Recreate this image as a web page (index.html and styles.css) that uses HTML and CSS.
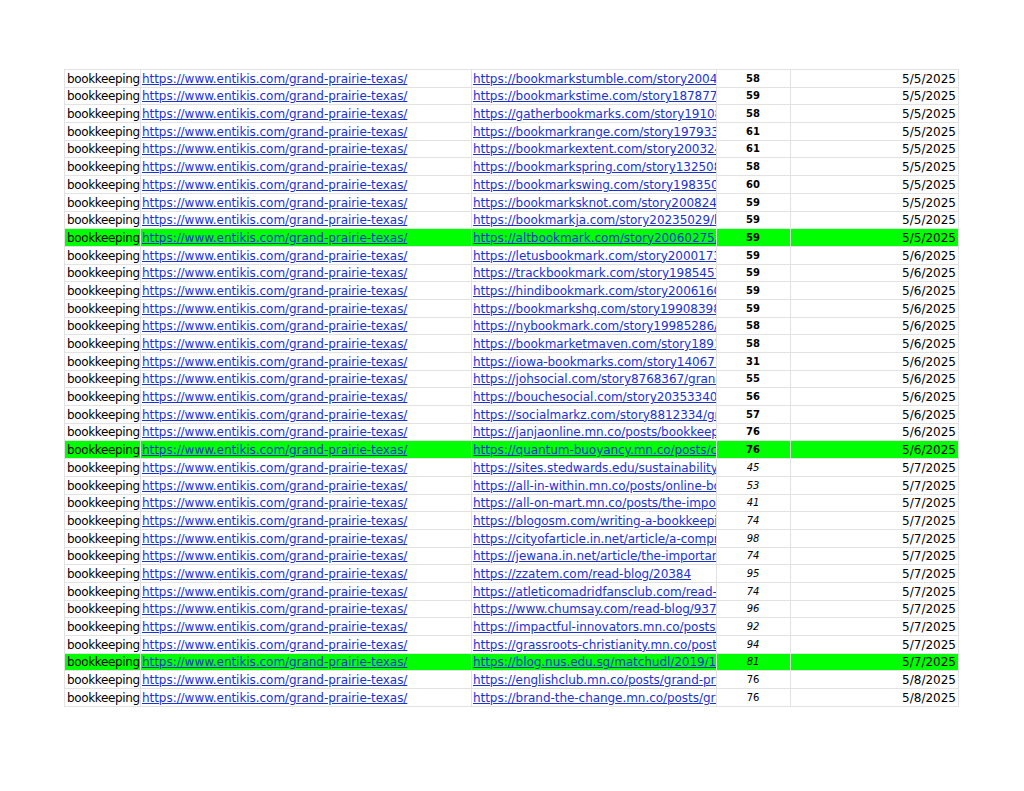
FILE: index.html
```html
<!DOCTYPE html>
<html>
<head>
<meta charset="utf-8">
<link rel="stylesheet" href="styles.css">
</head>
<body>
<table class="sheet">
<colgroup><col class="c1"><col class="c2"><col class="c3"><col class="c4"><col class="c5"></colgroup>
<tbody>
<tr><td>bookkeeping</td><td><a href="#">https://www.entikis.com/grand-prairie-texas/</a></td><td class="clip"><a href="#">https://bookmarkstumble.com/story20047135/bookkeeping</a></td><td class="num b">58</td><td class="date">5/5/2025</td></tr>
<tr><td>bookkeeping</td><td><a href="#">https://www.entikis.com/grand-prairie-texas/</a></td><td class="clip"><a href="#">https://bookmarkstime.com/story18787712/bookkeeping</a></td><td class="num b">59</td><td class="date">5/5/2025</td></tr>
<tr><td>bookkeeping</td><td><a href="#">https://www.entikis.com/grand-prairie-texas/</a></td><td class="clip"><a href="#">https://gatherbookmarks.com/story19108335/bookkeeping</a></td><td class="num b">58</td><td class="date">5/5/2025</td></tr>
<tr><td>bookkeeping</td><td><a href="#">https://www.entikis.com/grand-prairie-texas/</a></td><td class="clip"><a href="#">https://bookmarkrange.com/story19793355/bookkeeping</a></td><td class="num b">61</td><td class="date">5/5/2025</td></tr>
<tr><td>bookkeeping</td><td><a href="#">https://www.entikis.com/grand-prairie-texas/</a></td><td class="clip"><a href="#">https://bookmarkextent.com/story20032418/bookkeeping</a></td><td class="num b">61</td><td class="date">5/5/2025</td></tr>
<tr><td>bookkeeping</td><td><a href="#">https://www.entikis.com/grand-prairie-texas/</a></td><td class="clip"><a href="#">https://bookmarkspring.com/story13250881/bookkeeping</a></td><td class="num b">58</td><td class="date">5/5/2025</td></tr>
<tr><td>bookkeeping</td><td><a href="#">https://www.entikis.com/grand-prairie-texas/</a></td><td class="clip"><a href="#">https://bookmarkswing.com/story19835011/bookkeeping</a></td><td class="num b">60</td><td class="date">5/5/2025</td></tr>
<tr><td>bookkeeping</td><td><a href="#">https://www.entikis.com/grand-prairie-texas/</a></td><td class="clip"><a href="#">https://bookmarksknot.com/story20082415/bookkeeping</a></td><td class="num b">59</td><td class="date">5/5/2025</td></tr>
<tr><td>bookkeeping</td><td><a href="#">https://www.entikis.com/grand-prairie-texas/</a></td><td class="clip"><a href="#">https://bookmarkja.com/story20235029/bookkeeping</a></td><td class="num b">59</td><td class="date">5/5/2025</td></tr>
<tr class="hl"><td>bookkeeping</td><td><a href="#">https://www.entikis.com/grand-prairie-texas/</a></td><td class="clip"><a href="#">https://altbookmark.com/story20060275/bookkeeping</a></td><td class="num b">59</td><td class="date">5/5/2025</td></tr>
<tr><td>bookkeeping</td><td><a href="#">https://www.entikis.com/grand-prairie-texas/</a></td><td class="clip"><a href="#">https://letusbookmark.com/story20001732/bookkeeping</a></td><td class="num b">59</td><td class="date">5/6/2025</td></tr>
<tr><td>bookkeeping</td><td><a href="#">https://www.entikis.com/grand-prairie-texas/</a></td><td class="clip"><a href="#">https://trackbookmark.com/story19854573/bookkeeping</a></td><td class="num b">59</td><td class="date">5/6/2025</td></tr>
<tr><td>bookkeeping</td><td><a href="#">https://www.entikis.com/grand-prairie-texas/</a></td><td class="clip"><a href="#">https://hindibookmark.com/story20061602/bookkeeping</a></td><td class="num b">59</td><td class="date">5/6/2025</td></tr>
<tr><td>bookkeeping</td><td><a href="#">https://www.entikis.com/grand-prairie-texas/</a></td><td class="clip"><a href="#">https://bookmarkshq.com/story19908398/bookkeeping</a></td><td class="num b">59</td><td class="date">5/6/2025</td></tr>
<tr><td>bookkeeping</td><td><a href="#">https://www.entikis.com/grand-prairie-texas/</a></td><td class="clip"><a href="#">https://nybookmark.com/story19985286/bookkeeping</a></td><td class="num b">58</td><td class="date">5/6/2025</td></tr>
<tr><td>bookkeeping</td><td><a href="#">https://www.entikis.com/grand-prairie-texas/</a></td><td class="clip"><a href="#">https://bookmarketmaven.com/story18915210/bookkeeping</a></td><td class="num b">58</td><td class="date">5/6/2025</td></tr>
<tr><td>bookkeeping</td><td><a href="#">https://www.entikis.com/grand-prairie-texas/</a></td><td class="clip"><a href="#">https://iowa-bookmarks.com/story14067114/bookkeeping</a></td><td class="num b">31</td><td class="date">5/6/2025</td></tr>
<tr><td>bookkeeping</td><td><a href="#">https://www.entikis.com/grand-prairie-texas/</a></td><td class="clip"><a href="#">https://johsocial.com/story8768367/grand-prairie</a></td><td class="num b">55</td><td class="date">5/6/2025</td></tr>
<tr><td>bookkeeping</td><td><a href="#">https://www.entikis.com/grand-prairie-texas/</a></td><td class="clip"><a href="#">https://bouchesocial.com/story20353340/bookkeeping</a></td><td class="num b">56</td><td class="date">5/6/2025</td></tr>
<tr><td>bookkeeping</td><td><a href="#">https://www.entikis.com/grand-prairie-texas/</a></td><td class="clip"><a href="#">https://socialmarkz.com/story8812334/grand-prairie</a></td><td class="num b">57</td><td class="date">5/6/2025</td></tr>
<tr><td>bookkeeping</td><td><a href="#">https://www.entikis.com/grand-prairie-texas/</a></td><td class="clip"><a href="#">https://janjaonline.mn.co/posts/bookkeeping</a></td><td class="num b">76</td><td class="date">5/6/2025</td></tr>
<tr class="hl"><td>bookkeeping</td><td><a href="#">https://www.entikis.com/grand-prairie-texas/</a></td><td class="clip"><a href="#">https://quantum-buoyancy.mn.co/posts/citizens</a></td><td class="num b">76</td><td class="date">5/6/2025</td></tr>
<tr><td>bookkeeping</td><td><a href="#">https://www.entikis.com/grand-prairie-texas/</a></td><td class="clip"><a href="#">https://sites.stedwards.edu/sustainabilityinitiative</a></td><td class="num i">45</td><td class="date">5/7/2025</td></tr>
<tr><td>bookkeeping</td><td><a href="#">https://www.entikis.com/grand-prairie-texas/</a></td><td class="clip"><a href="#">https://all-in-within.mn.co/posts/online-bookkeeping</a></td><td class="num i">53</td><td class="date">5/7/2025</td></tr>
<tr><td>bookkeeping</td><td><a href="#">https://www.entikis.com/grand-prairie-texas/</a></td><td class="clip"><a href="#">https://all-on-mart.mn.co/posts/the-importance</a></td><td class="num i">41</td><td class="date">5/7/2025</td></tr>
<tr><td>bookkeeping</td><td><a href="#">https://www.entikis.com/grand-prairie-texas/</a></td><td class="clip"><a href="#">https://blogosm.com/writing-a-bookkeeping</a></td><td class="num i">74</td><td class="date">5/7/2025</td></tr>
<tr><td>bookkeeping</td><td><a href="#">https://www.entikis.com/grand-prairie-texas/</a></td><td class="clip"><a href="#">https://cityofarticle.in.net/article/a-comprehensive</a></td><td class="num i">98</td><td class="date">5/7/2025</td></tr>
<tr><td>bookkeeping</td><td><a href="#">https://www.entikis.com/grand-prairie-texas/</a></td><td class="clip"><a href="#">https://jewana.in.net/article/the-importance</a></td><td class="num i">74</td><td class="date">5/7/2025</td></tr>
<tr><td>bookkeeping</td><td><a href="#">https://www.entikis.com/grand-prairie-texas/</a></td><td class="clip"><a href="#">https://zzatem.com/read-blog/20384</a></td><td class="num i">95</td><td class="date">5/7/2025</td></tr>
<tr><td>bookkeeping</td><td><a href="#">https://www.entikis.com/grand-prairie-texas/</a></td><td class="clip"><a href="#">https://atleticomadridfansclub.com/read-blog/1234</a></td><td class="num i">74</td><td class="date">5/7/2025</td></tr>
<tr><td>bookkeeping</td><td><a href="#">https://www.entikis.com/grand-prairie-texas/</a></td><td class="clip"><a href="#">https://www.chumsay.com/read-blog/93712</a></td><td class="num i">96</td><td class="date">5/7/2025</td></tr>
<tr><td>bookkeeping</td><td><a href="#">https://www.entikis.com/grand-prairie-texas/</a></td><td class="clip"><a href="#">https://impactful-innovators.mn.co/posts/bookkeeping</a></td><td class="num i">92</td><td class="date">5/7/2025</td></tr>
<tr><td>bookkeeping</td><td><a href="#">https://www.entikis.com/grand-prairie-texas/</a></td><td class="clip"><a href="#">https://grassroots-christianity.mn.co/posts/bookkeeping</a></td><td class="num i">94</td><td class="date">5/7/2025</td></tr>
<tr class="hl"><td>bookkeeping</td><td><a href="#">https://www.entikis.com/grand-prairie-texas/</a></td><td class="clip"><a href="#">https://blog.nus.edu.sg/matchudl/2019/10/bookkeeping</a></td><td class="num i">81</td><td class="date">5/7/2025</td></tr>
<tr><td>bookkeeping</td><td><a href="#">https://www.entikis.com/grand-prairie-texas/</a></td><td class="clip"><a href="#">https://englishclub.mn.co/posts/grand-prairie</a></td><td class="num">76</td><td class="date">5/8/2025</td></tr>
<tr><td>bookkeeping</td><td><a href="#">https://www.entikis.com/grand-prairie-texas/</a></td><td class="clip"><a href="#">https://brand-the-change.mn.co/posts/grand-prairie</a></td><td class="num">76</td><td class="date">5/8/2025</td></tr>
</tbody>
</table>
</body>
</html>
```
FILE: styles.css
```css
html, body {
  margin: 0;
  padding: 0;
  background: #ffffff;
}
body {
  padding: 69px 0 0 64px;
  font-family: "DejaVu Sans", Verdana, sans-serif;
  font-size: 12px;
  color: #000000;
}
.sheet {
  border-collapse: collapse;
  table-layout: fixed;
  width: 894px;
}
.c1 { width: 76px; }
.c2 { width: 331px; }
.c3 { width: 245px; }
.c4 { width: 74px; }
.c5 { width: 168px; }
.sheet td {
  border: 1px solid #e2e2e2;
  height: 16.7px;
  padding: 0 2px 0 1px;
  white-space: nowrap;
  overflow: hidden;
  line-height: 16px;
  vertical-align: bottom;
}
.sheet td:first-child {
  padding-left: 2px;
  padding-right: 0;
  letter-spacing: -0.35px;
}
.sheet a {
  color: #1a32d4;
  text-decoration: underline;
  letter-spacing: -0.05px;
}
.clip {
  text-overflow: clip;
}
.num {
  text-align: center;
  font-size: 10px;
  padding-right: 0;
}
.num.b { font-weight: bold; }
.num.i { font-style: italic; }
.date {
  text-align: right;
}
.hl td {
  background: #00ff00;
}
```
